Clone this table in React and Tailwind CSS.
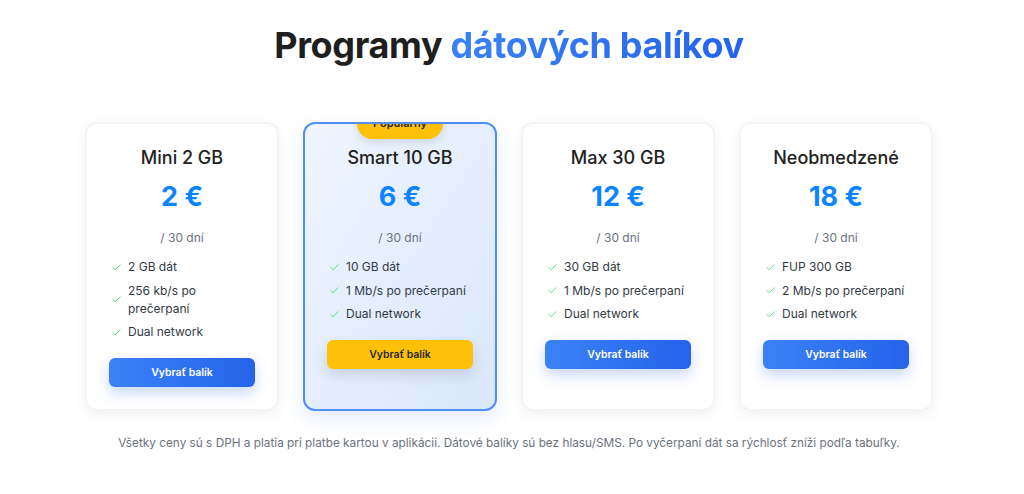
import React from 'react';
import { Check } from 'lucide-react';

const plans = [
    { name: 'Mini 2 GB', price: '2 €', features: ['2 GB dát', '256 kb/s po prečerpaní', 'Dual network'] },
    { name: 'Smart 10 GB', price: '6 €', features: ['10 GB dát', '1 Mb/s po prečerpaní', 'Dual network'], popular: true },
    { name: 'Max 30 GB', price: '12 €', features: ['30 GB dát', '1 Mb/s po prečerpaní', 'Dual network'] },
    { name: 'Neobmedzené', price: '18 €', features: ['FUP 300 GB', '2 Mb/s po prečerpaní', 'Dual network'] },
];

const PlanCard = ({ plan }) => {
    const shell = plan.popular
        ? 'border-2 border-[#4f8ef7] bg-gradient-to-br from-[#f0f5ff] to-[#d9e7fc] shadow-[0_8px_20px_rgba(37,99,235,0.12)]'
        : 'border-2 border-[#f3f4f6] bg-white shadow-[0_4px_14px_rgba(0,0,0,0.06)]';

    return (
        <div className={`relative overflow-hidden rounded-xl px-[22px] pt-5 pb-[22px] ${shell}`}>
            {plan.popular && (
                // badge sits half outside the card, so it gets clipped at the top edge
                <div className="absolute left-1/2 top-[-16px] -translate-x-1/2 h-[31px] w-[86px] rounded-full bg-[#ffc107] shadow-[0_3px_8px_rgba(0,0,0,0.12)] flex items-center justify-center text-[11px] font-semibold text-[#1f2937]">
                    Populárny
                </div>
            )}
            <h3 className="text-center text-[18px] leading-[28px] font-medium text-[#222]">{plan.name}</h3>
            <p className="mt-[7px] text-center text-[27px] leading-[36px] font-bold text-[#0a84ff]">{plan.price}</p>
            <p className="mt-[14px] text-center text-[12px] leading-[18px] text-[#6b7280]">/ 30 dní</p>

            <ul className="mt-[11px] flex flex-col gap-[5.5px] pl-[2px]">
                {plan.features.map((f) => (
                    <li key={f} className="flex items-center gap-[6px] text-[12px] leading-[18px] text-[#333a45]">
                        <Check size={11} strokeWidth={2} className="shrink-0 text-[#4ade80]" />
                        <span>{f}</span>
                    </li>
                ))}
            </ul>

            <button
                className={`mt-[17px] h-[29px] w-full rounded-md text-[10.5px] font-semibold ${plan.popular
                    ? 'bg-[#ffc107] text-[#1f2937] shadow-[0_6px_14px_rgba(0,0,0,0.12)]'
                    : 'bg-gradient-to-r from-[#3b82f6] to-[#2563eb] text-white shadow-[0_6px_14px_rgba(37,99,235,0.25)]'
                    }`}
            >
                Vybrať balík
            </button>
        </div>
    );
};

const App = () => {
    return (
        <div className="min-h-screen bg-white font-['Inter',sans-serif]">
            <div className="w-[1018px] pt-[25px]">
                {/* Heading */}
                <h1 className="text-center text-[36px] leading-[40px] font-bold tracking-[-0.01em] text-[#1f1f1f]">
                    Programy{' '}
                    <span className="bg-gradient-to-r from-[#3b82f6] to-[#2563eb] bg-clip-text text-transparent">
                        dátových balíkov
                    </span>
                </h1>

                {/* Plans */}
                <div className="mx-auto mt-[57px] grid w-[848px] grid-cols-4 gap-6">
                    {plans.map((p) => (
                        <PlanCard key={p.name} plan={p} />
                    ))}
                </div>

                <p className="mt-6 text-center text-[11.8px] leading-4 text-[#6b7280]">
                    Všetky ceny sú s DPH a platia pri platbe kartou v aplikácii. Dátové balíky sú bez hlasu/SMS. Po vyčerpaní dát sa rýchlosť zníži podľa tabuľky.
                </p>
            </div>
        </div>
    );
};

export default App;
